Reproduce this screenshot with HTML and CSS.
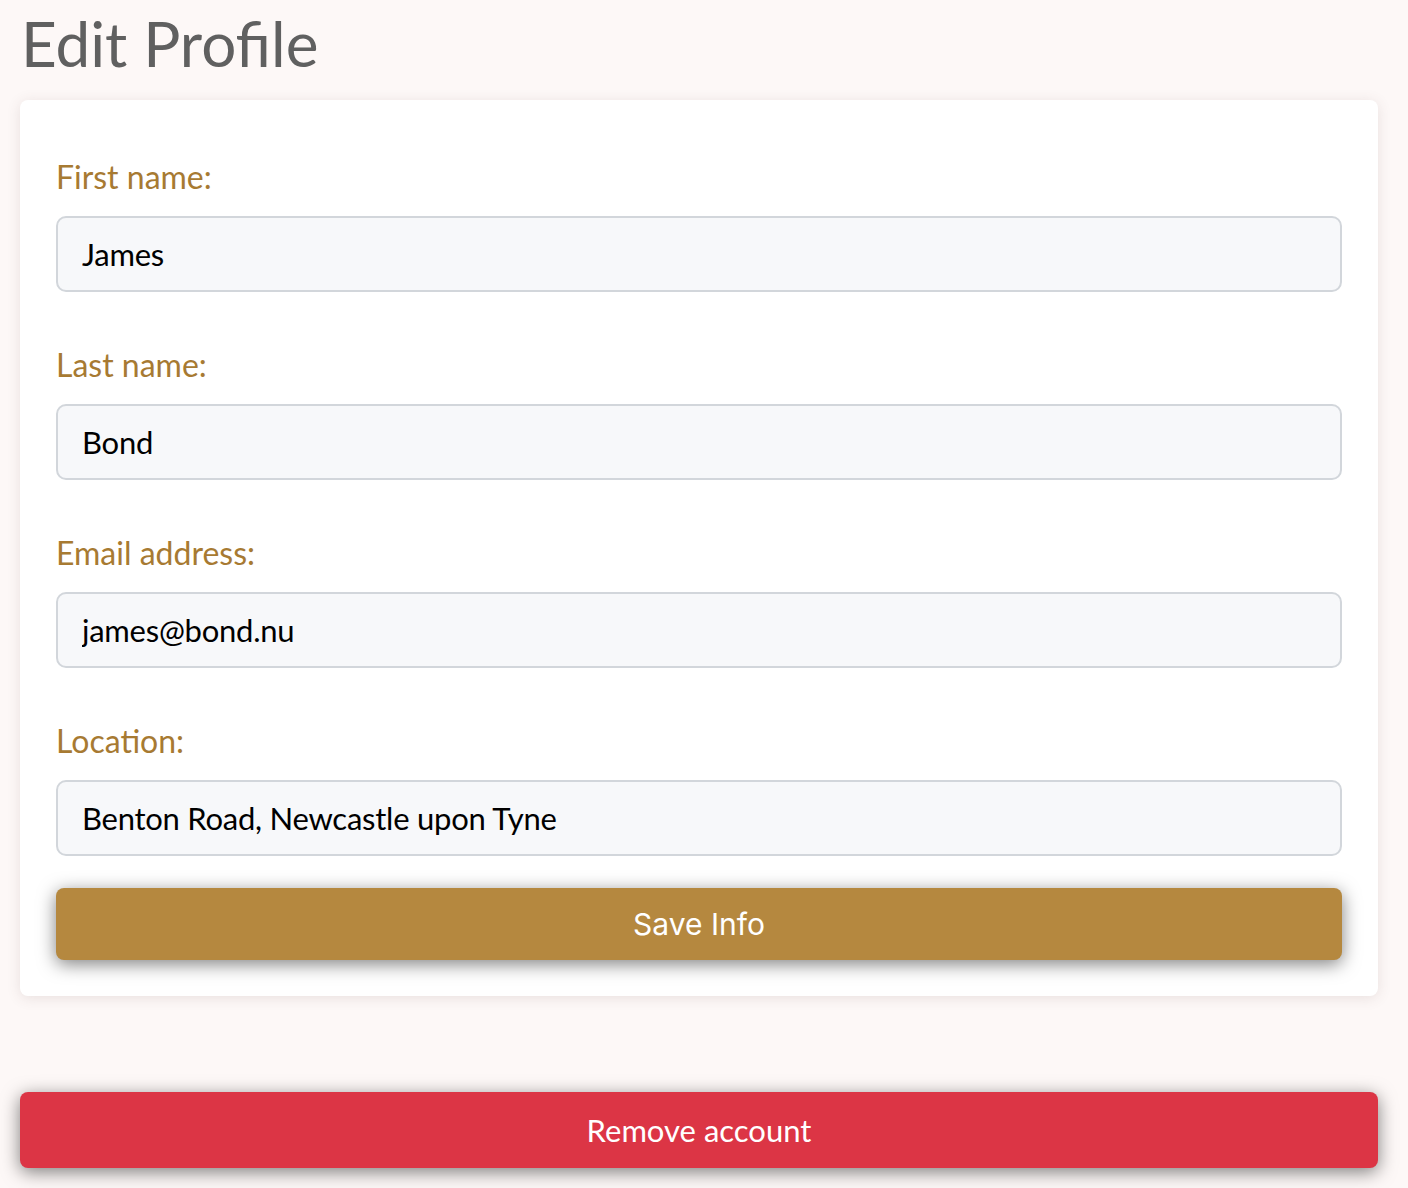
FILE: index.html
```html
<!DOCTYPE html>
<html lang="en">
<head>
<meta charset="utf-8">
<title>Edit Profile</title>
<link rel="stylesheet" href="styles.css">
</head>
<body>
<main class="page">
  <h1 class="title">Edit Profile</h1>
  <form class="card">
    <div class="group">
      <label class="label" for="first">First name:</label>
      <input class="input" id="first" type="text" value="James">
    </div>
    <div class="group">
      <label class="label" for="last">Last name:</label>
      <input class="input" id="last" type="text" value="Bond">
    </div>
    <div class="group">
      <label class="label" for="email">Email address:</label>
      <input class="input" id="email" type="text" value="james@bond.nu">
    </div>
    <div class="group last">
      <label class="label" for="loc">Location:</label>
      <input class="input" id="loc" type="text" value="Benton Road, Newcastle upon Tyne">
    </div>
    <button class="btn save" type="button">Save Info</button>
  </form>
  <button class="btn remove" type="button">Remove account</button>
</main>
</body>
</html>
```

FILE: styles.css
```css
html, body {
  margin: 0;
  padding: 0;
  background: #fdf8f7;
}
body {
  font-family: Lato, "Open Sans", sans-serif;
}
.page {
  display: flex;
  flex-direction: column;
  padding: 3px 30px 20px 20px;
}
.title {
  margin: 0 0 0 1px;
  font-weight: 400;
  font-size: 62px;
  line-height: 80px;
  color: #606060;
}
.card {
  margin-top: 17px;
  background: #fff;
  border-radius: 8px;
  box-shadow: 0 2px 14px rgba(90, 60, 60, 0.13);
  padding: 59px 36px 36px;
  display: flex;
  flex-direction: column;
}
.group {
  display: flex;
  flex-direction: column;
  margin-bottom: 55px;
}
.group.last {
  margin-bottom: 32px;
}
.label {
  font-size: 32px;
  line-height: 36px;
  color: #a77a32;
  margin-bottom: 21px;
}
.input {
  box-sizing: border-box;
  height: 76px;
  border: 2px solid #d2d6db;
  border-radius: 10px;
  background: #f7f8fa;
  padding: 0 24px;
  font-family: Lato, "Open Sans", sans-serif;
  font-size: 31px;
  letter-spacing: -0.25px;
  color: #000;
  outline: none;
}
.btn {
  display: block;
  width: 100%;
  border: none;
  border-radius: 8px;
  color: #fff;
  cursor: pointer;
}
.save {
  height: 72px;
  background: #b5883f;
  font-family: Inter, Roboto, sans-serif;
  font-size: 30px;
  box-shadow: 0 4px 18px rgba(0, 0, 0, 0.5);
}
.remove {
  margin-top: 96px;
  height: 76px;
  background: #dc3545;
  font-family: Lato, "Open Sans", sans-serif;
  font-size: 31px;
  box-shadow: 0 4px 18px rgba(0, 0, 0, 0.5);
}
```
